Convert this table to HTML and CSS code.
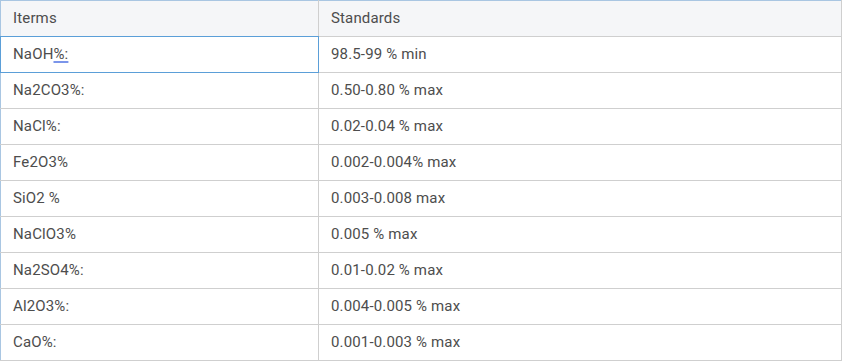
FILE: index.html
```html
<!DOCTYPE html>
<html lang="en">
<head>
    <meta charset="UTF-8">
    <title>Specifications</title>
    <link rel="stylesheet" href="styles.css">
</head>
<body>
    <table class="spec-table">
        <thead>
            <tr>
                <th class="col-item">Iterms</th>
                <th>Standards</th>
            </tr>
        </thead>
        <tbody>
            <tr>
                <td class="selected">NaOH<span class="mark">%:</span></td>
                <td>98.5-99 % min</td>
            </tr>
            <tr>
                <td>Na2CO3%:</td>
                <td>0.50-0.80 % max</td>
            </tr>
            <tr>
                <td>NaCl%:</td>
                <td>0.02-0.04 % max</td>
            </tr>
            <tr>
                <td>Fe2O3%</td>
                <td>0.002-0.004% max</td>
            </tr>
            <tr>
                <td>SiO2 %</td>
                <td>0.003-0.008 max</td>
            </tr>
            <tr>
                <td>NaClO3%</td>
                <td>0.005 % max</td>
            </tr>
            <tr>
                <td>Na2SO4%:</td>
                <td>0.01-0.02 % max</td>
            </tr>
            <tr>
                <td>Al2O3%:</td>
                <td>0.004-0.005 % max</td>
            </tr>
            <tr>
                <td>CaO%:</td>
                <td>0.001-0.003 % max</td>
            </tr>
        </tbody>
    </table>
</body>
</html>
```

FILE: styles.css
```css
* {
    margin: 0;
    padding: 0;
    box-sizing: border-box;
}

body {
    background-color: #fff;
    font-family: Roboto, 'Liberation Sans', sans-serif;
    font-size: 15px;
    letter-spacing: 0.15px;
    color: #4d4d4d;
}

.spec-table {
    width: 842px;
    border-collapse: collapse;
    table-layout: fixed;
}

.spec-table th,
.spec-table td {
    border: 1px solid #cfcfcf;
    padding: 8px 12px;
    line-height: 19px;
    text-align: left;
    font-weight: normal;
}

.spec-table th {
    background-color: #f5f6f8;
    border-top-color: #a9c6e2;
}

.spec-table tr > :first-child {
    border-left-color: #a9c6e2;
}

.col-item {
    width: 318px;
}

/* focused cell from the editor */
.spec-table th.col-item {
    border-bottom-color: #5b9fd8;
}

.spec-table td.selected {
    border-color: #5b9fd8;
}

.mark {
    text-decoration: underline;
    text-decoration-color: #7b95ea;
    text-decoration-thickness: 2px;
    text-underline-offset: 2px;
}
```
